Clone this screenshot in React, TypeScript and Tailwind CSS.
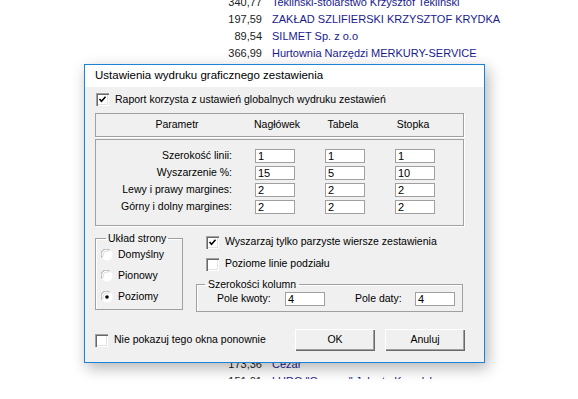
import React from "react";

const font = { fontFamily: '"Liberation Sans", Arial, sans-serif' };

function CheckBox({ checked }: { checked?: boolean }) {
  return (
    <div className="w-[13px] h-[13px] shrink-0 bg-white flex items-center justify-center shadow-[inset_1px_1px_0_#a0a0a0,inset_2px_2px_0_#696969,inset_-1px_-1px_0_#ffffff,inset_-2px_-2px_0_#e3e3e3]">
      {checked && (
        <svg width="9" height="9" viewBox="0 0 9 9">
          <polyline points="1.5,4 3.5,6.2 7.5,1.8" fill="none" stroke="#000" strokeWidth="1.6" />
        </svg>
      )}
    </div>
  );
}

function Radio({ checked }: { checked?: boolean }) {
  return (
    <svg width="12" height="12" viewBox="0 0 12 12" className="shrink-0">
      <circle cx="6" cy="6" r="5.5" fill="#ffffff" />
      <path d="M1.2 8.5 A5.2 5.2 0 0 1 8.5 1.2" fill="none" stroke="#a0a0a0" strokeWidth="1" />
      <path d="M2.2 7.6 A4.2 4.2 0 0 1 7.6 2.2" fill="none" stroke="#d8d8d8" strokeWidth="1" />
      {checked && <circle cx="6" cy="6" r="1.8" fill="#000" />}
    </svg>
  );
}

function Field({ value, className = "" }: { value: string; className?: string }) {
  return (
    <div className={`w-[40px] h-[14px] border border-[#a0a0a0] bg-white pl-[2px] text-[11px] leading-[12px] text-black ${className}`}>
      {value}
    </div>
  );
}

function Btn({ label }: { label: string }) {
  return (
    <div className="w-[80px] h-[22px] bg-[#f0f0f0] flex items-center justify-center text-[10.5px] text-black shadow-[inset_1px_1px_0_#ffffff,inset_-1px_-1px_0_#696969,inset_-2px_-2px_0_#a0a0a0]">
      {label}
    </div>
  );
}

const rows = [
  { label: "Szerokość linii:", v: ["1", "1", "1"] },
  { label: "Wyszarzenie %:", v: ["15", "5", "10"] },
  { label: "Lewy i prawy margines:", v: ["2", "2", "2"] },
  { label: "Górny i dolny margines:", v: ["2", "2", "2"] },
];

const topList = [
  ["340,77", "Tekliński-stolarstwo Krzysztof Tekliński"],
  ["197,59", "ZAKŁAD SZLIFIERSKI KRZYSZTOF KRYDKA"],
  ["89,54", "SILMET Sp. z o.o"],
  ["366,99", "Hurtownia Narzędzi MERKURY-SERVICE"],
];

const bottomList = [
  ["173,36", "Cezar"],
  ["151,01", "LUDO \"Gomme\" Jolanta Kowalska"],
];

function ListRow({ n, name }: { n: string; name: string }) {
  return (
    <div className="flex h-[17px] items-center text-[11px] whitespace-nowrap">
      <div className="w-[262px] text-right text-[#1a1a1a]">{n}</div>
      <div className="ml-[10px] text-[#1a1a8e]">{name}</div>
    </div>
  );
}

export default function App() {
  return (
    <div className="relative w-[578px] h-[399px] bg-white overflow-hidden" style={font}>
      {/* background list */}
      <div className="h-[379px] overflow-hidden flex flex-col">
        <div className="mt-[-6px] flex flex-col">
          {topList.map(([n, name]) => (
            <ListRow key={n} n={n} name={name} />
          ))}
        </div>
        <div className="mt-[294px] flex flex-col">
          {bottomList.map(([n, name]) => (
            <ListRow key={n} n={n} name={name} />
          ))}
        </div>
      </div>

      {/* dialog */}
      <div className="absolute left-[84px] top-[64px] w-[401px] h-[299px] border border-[#1883d7] bg-[#f0f0f0] flex flex-col shadow-[3px_5px_14px_rgba(0,0,0,0.3)] text-black text-[10.5px]">
        <div className="h-[22px] bg-white flex items-center pl-[10px] text-[11.5px] text-black">
          Ustawienia wydruku graficznego zestawienia
        </div>
        <div className="flex-1 flex flex-col pl-[10px]">
          <div className="mt-[6px] h-[13px] flex items-center pl-[1px]">
            <CheckBox checked />
            <span className="ml-[6px]">Raport korzysta z ustawień globalnych wydruku zestawień</span>
          </div>

          <div className="mt-[7px] w-[369px] h-[24px] border border-[#a0a0a0] shadow-[1px_1px_0_#ffffff] flex items-center whitespace-nowrap">
            <div className="w-[162px] flex justify-center">Parametr</div>
            <div className="w-[38px] flex justify-center">Nagłówek</div>
            <div className="w-[94px] flex justify-center">Tabela</div>
            <div className="w-[46px] flex justify-center">Stopka</div>
          </div>

          <div className="mt-[2px] w-[369px] h-[87px] border border-[#a0a0a0] shadow-[1px_1px_0_#ffffff] flex flex-col gap-[3px] pt-[9px]">
            {rows.map((r) => (
              <div key={r.label} className="flex items-center h-[14px] whitespace-nowrap">
                <div className="w-[136px] text-right">{r.label}</div>
                <Field value={r.v[0]} className="ml-[23px]" />
                <Field value={r.v[1]} className="ml-[30px]" />
                <Field value={r.v[2]} className="ml-[30px]" />
              </div>
            ))}
          </div>

          <div className="mt-[6px] flex">
            <fieldset className="w-[88px] h-[78px] border border-[#a0a0a0] shadow-[inset_1px_1px_0_#ffffff] flex flex-col">
              <legend className="ml-[10px] px-[2px] leading-[12px] text-[10.5px]">Układ strony</legend>
              {["Domyślny", "Pionowy", "Poziomy"].map((l, i) => (
                <div key={l} className="h-[21px] flex items-center pl-[5px]">
                  <Radio checked={i === 2} />
                  <span className="ml-[5px]">{l}</span>
                </div>
              ))}
            </fieldset>

            <div className="ml-[13px] flex flex-col">
              <div className="mt-[2px] h-[16px] flex items-center pl-[10px]">
                <CheckBox checked />
                <span className="ml-[6px]">Wyszarzaj tylko parzyste wiersze zestawienia</span>
              </div>
              <div className="mt-[6px] h-[16px] flex items-center pl-[10px]">
                <CheckBox />
                <span className="ml-[6px]">Poziome linie podziału</span>
              </div>
              <fieldset className="mt-[6px] w-[267px] h-[34px] border border-[#a0a0a0] shadow-[inset_1px_1px_0_#ffffff]">
                <legend className="ml-[8px] px-[3px] leading-[12px] text-[10.5px]">Szerokości kolumn</legend>
                <div className="mt-[2px] flex items-center h-[14px] whitespace-nowrap">
                  <span className="ml-[20px] w-[68px]">Pole kwoty:</span>
                  <Field value="4" />
                  <span className="ml-[30px] w-[60px]">Pole daty:</span>
                  <Field value="4" className="w-[39px]" />
                </div>
              </fieldset>
            </div>
          </div>

          <div className="mt-[17px] h-[22px] flex items-center">
            <CheckBox />
            <span className="ml-[6px]">Nie pokazuj tego okna ponownie</span>
            <div className="ml-auto mr-[19px] flex gap-[10px]">
              <Btn label="OK" />
              <Btn label="Anuluj" />
            </div>
          </div>
        </div>
      </div>
    </div>
  );
}
